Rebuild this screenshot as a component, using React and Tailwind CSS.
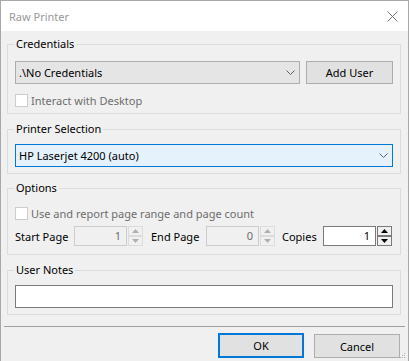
import React from 'react';

function Chevron() {
  return (
    <svg width="9" height="5" viewBox="0 0 9 5" className="block">
      <polyline points="0.5,0.5 4.5,4.5 8.5,0.5" fill="none" stroke="#606060" strokeWidth="1" />
    </svg>
  );
}

function Combo({ text, active }) {
  return (
    <div
      className={
        active
          ? 'flex-1 h-[23px] flex items-center border border-[#0078d7] bg-[#e5f1fb]'
          : 'w-[285px] h-[23px] flex items-center border border-[#adadad] bg-[#e5e5e5]'
      }
    >
      <span className="flex-1 pl-[3px] leading-none">{text}</span>
      <span className="w-[17px] flex items-center justify-center">
        <Chevron />
      </span>
    </div>
  );
}

function Check({ label }) {
  return (
    <div className="flex items-center h-[13px]">
      <span className="w-[13px] h-[13px] border border-[#cccccc] bg-white" />
      <span className="ml-[3px] text-[#6d6d6d] leading-none">{label}</span>
    </div>
  );
}

function Arrow({ up, color }) {
  return (
    <svg width="7" height="4" viewBox="0 0 7 4" className="block">
      <polygon points={up ? '0,4 7,4 3.5,0' : '0,0 7,0 3.5,4'} fill={color} />
    </svg>
  );
}

function Spinner({ enabled }) {
  const box = enabled
    ? 'h-[10px] flex items-center justify-center border border-[#7a7a7a] bg-[#f0f0f0]'
    : 'h-[10px] flex items-center justify-center border border-[#dcdcdc] bg-[#f0f0f0]';
  const c = enabled ? '#000000' : '#b0b0b0';
  return (
    <div className="w-[15px] ml-[1px] shrink-0 flex flex-col">
      <div className={box}><Arrow up color={c} /></div>
      <div className={box}><Arrow color={c} /></div>
    </div>
  );
}

function NumBox({ value, enabled }) {
  return (
    <div
      className={
        'w-[53px] h-[20px] shrink-0 flex items-center justify-end pr-[5px]' +
        (enabled ? ' border border-[#7a7a7a] bg-white text-black' : ' border border-[#cccccc] bg-[#f0f0f0] text-[#6d6d6d]')
      }
    >
      {value}
    </div>
  );
}

function Group({ title, className, children }) {
  return (
    <fieldset className={'w-[394px] ml-[6px] border border-[#dcdcdc] ' + (className || '')}>
      <legend className="ml-[6px] px-[2px] leading-[16px] h-[16px]">{title}</legend>
      {children}
    </fieldset>
  );
}

export default function App() {
  return (
    <div className="w-[409px] h-[361px] overflow-hidden border-t border-x border-[#a8a8a8] bg-[#f0f0f0] text-[11px] text-black font-['Noto_Sans',sans-serif] relative">
      <div className="h-[30px] bg-white flex items-center justify-between pl-[8px] pr-[10px]">
        <span className="text-[#999999] leading-none">Raw Printer</span>
        <svg width="11" height="11" viewBox="0 0 11 11" className="block">
          <path d="M0.5 0.5 L10.5 10.5 M10.5 0.5 L0.5 10.5" stroke="#777777" strokeWidth="1" />
        </svg>
      </div>

      <Group title="Credentials" className="mt-[5px]">
        <div className="px-[7px] pt-[9px] pb-[6px]">
          <div className="flex gap-[6px]">
            <Combo text=".\No Credentials" />
            <button className="w-[87px] h-[23px] border border-[#adadad] bg-[#e1e1e1] leading-none">Add User</button>
          </div>
          <div className="mt-[10px]">
            <Check label="Interact with Desktop" />
          </div>
        </div>
      </Group>

      <Group title="Printer Selection" className="mt-[7px]">
        <div className="px-[7px] pt-[7px] pb-[6px] flex">
          <Combo text="HP Laserjet 4200 (auto)" active />
        </div>
      </Group>

      <Group title="Options" className="mt-[6px]">
        <div className="px-[7px] pt-[11px] pb-[8px]">
          <Check label="Use and report page range and page count" />
          <div className="mt-[6px] flex items-center h-[20px]">
            <span className="w-[59px] shrink-0 leading-none">Start Page</span>
            <NumBox value="1" />
            <Spinner />
            <span className="ml-[8px] w-[55px] shrink-0 leading-none">End Page</span>
            <NumBox value="0" />
            <Spinner />
            <span className="ml-[7px] w-[41px] shrink-0 leading-none">Copies</span>
            <NumBox value="1" enabled />
            <Spinner enabled />
          </div>
        </div>
      </Group>

      <Group title="User Notes" className="mt-[7px]">
        <div className="px-[7px] pt-[7px] pb-[6px]">
          <div className="h-[23px] border border-[#7a7a7a] bg-white" />
        </div>
      </Group>

      <div className="mt-[11px] mx-[3px] h-px bg-[#a0a0a0]" />

      <div className="mt-[6px] flex justify-end gap-[10px] pr-[8px]">
        <button className="w-[86px] h-[25px] border-2 border-[#0078d7] bg-[#e1e1e1] leading-none">OK</button>
        <button className="w-[86px] h-[24px] mt-[1px] border border-[#adadad] bg-[#e1e1e1] leading-none">Cancel</button>
      </div>

      <svg width="6" height="6" viewBox="0 0 6 6" className="absolute right-[2px] top-[352px]">
        <rect x="4" y="0" width="1" height="1" fill="#b0b0b0" />
        <rect x="2" y="2" width="1" height="1" fill="#b0b0b0" />
        <rect x="4" y="2" width="1" height="1" fill="#b0b0b0" />
        <rect x="0" y="4" width="1" height="1" fill="#b0b0b0" />
        <rect x="2" y="4" width="1" height="1" fill="#b0b0b0" />
        <rect x="4" y="4" width="1" height="1" fill="#b0b0b0" />
      </svg>
    </div>
  );
}
